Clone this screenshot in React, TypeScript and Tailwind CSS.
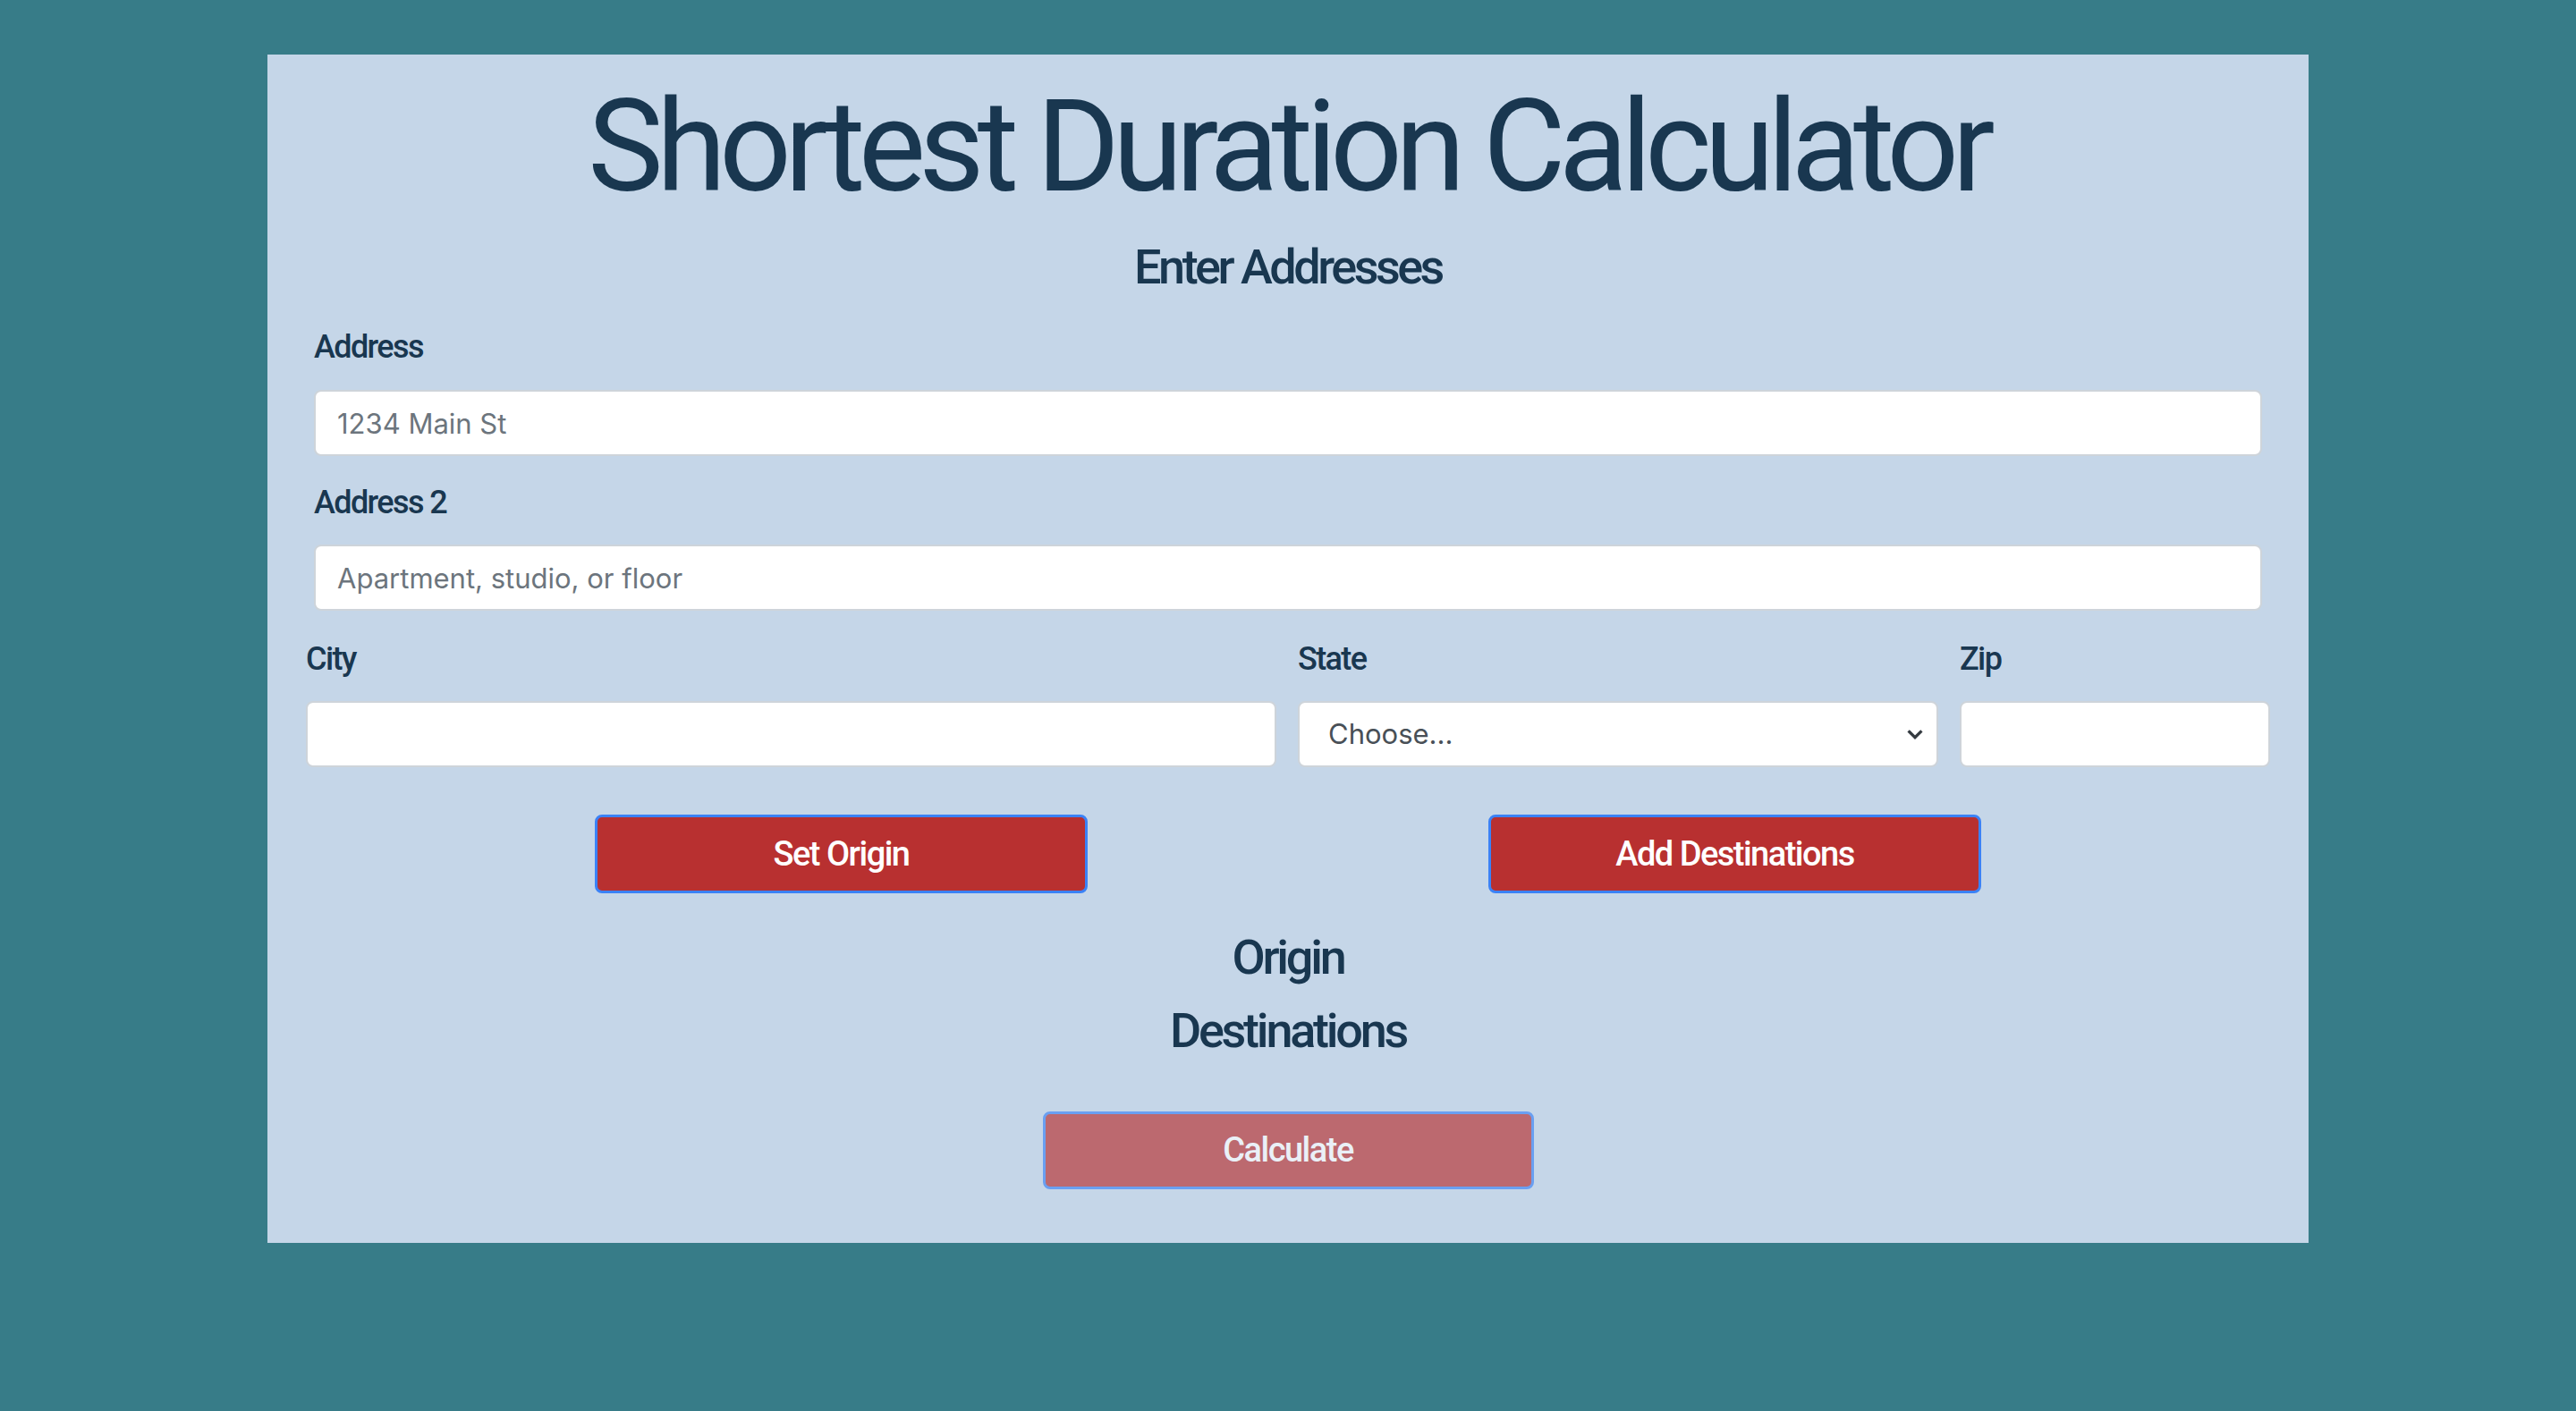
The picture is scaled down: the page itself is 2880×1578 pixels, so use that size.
import { useState } from "react";

const font = "font-['Roboto','Noto_Sans',sans-serif]";
const field =
  "block w-full h-[74px] rounded-[8px] border-2 border-[#ced4da] bg-white px-[24px] font-['Inter','Liberation_Sans',sans-serif] text-[31px] text-[#495057] placeholder:text-[#6c757d] outline-none";
const button = `h-[88px] w-[551px] rounded-[8px] border-[3px] border-[#3b82f6] bg-[#b83030] text-[38px] font-medium tracking-[-0.04em] text-white ${font}`;

const states = ["AL", "AK", "AZ", "AR", "CA", "CO", "CT", "DE", "FL", "GA", "NY", "TX", "WA"];

const Label = ({ htmlFor, children }: { htmlFor: string; children: React.ReactNode }) => (
  <label
    htmlFor={htmlFor}
    className={`block text-[36px] leading-[48px] font-medium tracking-[-0.045em] text-[#193750] ${font}`}
  >
    {children}
  </label>
);

const App = () => {
  const [address, setAddress] = useState("");
  const [address2, setAddress2] = useState("");
  const [city, setCity] = useState("");
  const [state, setState] = useState("");
  const [zip, setZip] = useState("");

  return (
    <div className="min-h-screen w-full bg-[#377c88] pt-[61px] pb-[188px]">
      <div className="mx-auto w-[2282px] bg-[#c5d6e8] pt-[24px] pb-[60px]">
        <h1 className={`text-center text-[142px] leading-[160px] font-normal tracking-[-0.055em] text-[#193750] ${font}`}>
          Shortest Duration Calculator
        </h1>
        <h3 className={`mt-[18px] text-center text-[54px] leading-[72px] font-medium tracking-[-0.065em] text-[#193750] ${font}`}>
          Enter Addresses
        </h3>

        <form className="mt-[29px]" onSubmit={(e) => e.preventDefault()}>
          <div className="px-[52px]">
            <Label htmlFor="address">Address</Label>
            <input
              id="address"
              type="text"
              placeholder="1234 Main St"
              value={address}
              onChange={(e) => setAddress(e.target.value)}
              className={`mt-[24px] ${field}`}
            />
            <div className="mt-[28px]">
              <Label htmlFor="address2">Address 2</Label>
            </div>
            <input
              id="address2"
              type="text"
              placeholder="Apartment, studio, or floor"
              value={address2}
              onChange={(e) => setAddress2(e.target.value)}
              className={`mt-[23px] ${field}`}
            />
          </div>

          <div className="mt-[30px] grid grid-cols-[1085px_716px_347px] gap-x-[24px] px-[43px]">
            <div>
              <Label htmlFor="city">City</Label>
              <input
                id="city"
                type="text"
                value={city}
                onChange={(e) => setCity(e.target.value)}
                className={`mt-[23px] ${field}`}
              />
            </div>
            <div>
              <Label htmlFor="state">State</Label>
              <div className="relative mt-[23px]">
                <select
                  id="state"
                  value={state}
                  onChange={(e) => setState(e.target.value)}
                  className={`appearance-none pl-[32px] pr-[56px] text-[#343a40] ${field}`}
                >
                  <option value="">Choose...</option>
                  {states.map((s) => (
                    <option key={s} value={s}>
                      {s}
                    </option>
                  ))}
                </select>
                <svg
                  className="pointer-events-none absolute right-[16px] top-1/2 h-[20px] w-[20px] -translate-y-1/2"
                  viewBox="0 0 16 16"
                  fill="none"
                  stroke="#343a40"
                  strokeWidth="2.6"
                  strokeLinecap="square"
                >
                  <path d="M3 6l5 5 5-5" />
                </svg>
              </div>
            </div>
            <div>
              <Label htmlFor="zip">Zip</Label>
              <input
                id="zip"
                type="text"
                value={zip}
                onChange={(e) => setZip(e.target.value)}
                className={`mt-[23px] ${field}`}
              />
            </div>
          </div>

          <div className="mt-[53px] flex justify-center gap-[448px]">
            <button type="button" className={button}>
              Set Origin
            </button>
            <button type="button" className={button}>
              Add Destinations
            </button>
          </div>
        </form>

        <h3 className={`mt-[36px] text-center text-[54px] leading-[72px] font-medium tracking-[-0.06em] text-[#193750] ${font}`}>
          Origin
        </h3>
        <h3 className={`mt-[10px] text-center text-[54px] leading-[72px] font-medium tracking-[-0.06em] text-[#193750] ${font}`}>
          Destinations
        </h3>

        <div className="mt-[54px] flex justify-center">
          <button type="button" disabled className={`!w-[549px] !h-[87px] opacity-65 ${button}`}>
            Calculate
          </button>
        </div>
      </div>
    </div>
  );
};

export default App;
